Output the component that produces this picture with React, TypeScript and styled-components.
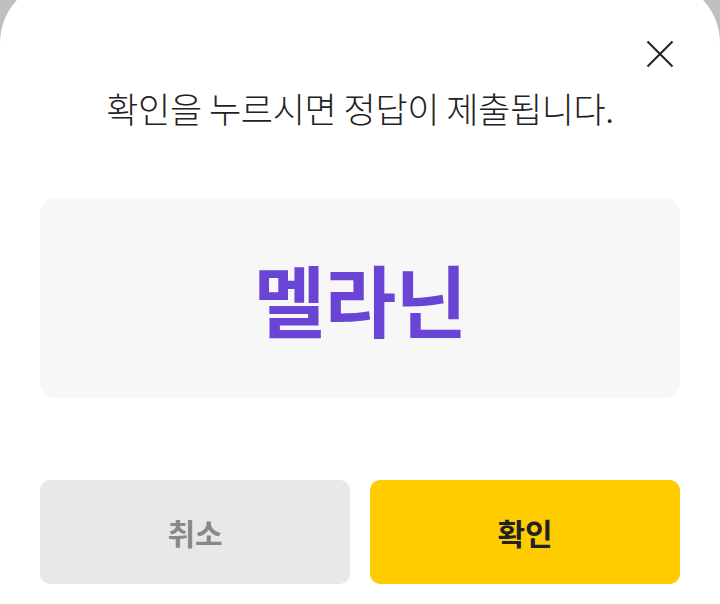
import styled, { createGlobalStyle } from "styled-components";

const GlobalStyle = createGlobalStyle`
  html, body {
    margin: 0;
    padding: 0;
    background: #bfbfbf;
    overflow: hidden;
  }
  body {
    font-family: "Noto Sans CJK KR", "Noto Sans", sans-serif;
  }
`;

const Sheet = styled.div`
  width: 720px;
  height: 624px;
  margin-top: -20px;
  box-sizing: border-box;
  background: #ffffff;
  border-radius: 63px 63px 0 0;
  padding: 60px 40px 20px;
  display: flex;
  flex-direction: column;
`;

const TopBar = styled.div`
  display: flex;
  justify-content: flex-end;
  height: 26px;
`;

const CloseButton = styled.button`
  width: 28px;
  height: 28px;
  padding: 0;
  margin-right: 6px;
  border: none;
  background: transparent;
  cursor: pointer;
  display: flex;
  align-items: center;
  justify-content: center;
`;

const Title = styled.p`
  margin: 17px 0 0;
  text-align: center;
  font-size: 35px;
  line-height: 50px;
  font-weight: 300;
  color: #222222;
  letter-spacing: -0.4px;
`;

const AnswerCard = styled.div`
  margin-top: 65px;
  height: 200px;
  border-radius: 16px;
  background: #f7f7f7;
  display: flex;
  align-items: center;
  justify-content: center;
`;

const AnswerWord = styled.span`
  font-size: 78px;
  font-weight: 700;
  color: #6a44d4;
  letter-spacing: -1px;
  line-height: 1;
`;

const ButtonRow = styled.div`
  margin-top: auto;
  display: grid;
  grid-template-columns: 1fr 1fr;
  gap: 20px;
`;

const ActionButton = styled.button<{ $primary?: boolean }>`
  height: 104px;
  border: none;
  border-radius: 10px;
  font-family: inherit;
  font-size: 30px;
  font-weight: 700;
  cursor: pointer;
  background: ${(p) => (p.$primary ? "#ffcc00" : "#e8e8e8")};
  color: ${(p) => (p.$primary ? "#222222" : "#888888")};
`;

function CloseIcon() {
  return (
    <svg width="28" height="28" viewBox="0 0 28 28">
      <path
        d="M1.5 1.5 L26.5 26.5 M26.5 1.5 L1.5 26.5"
        stroke="#222"
        strokeWidth="2"
        fill="none"
      />
    </svg>
  );
}

export default function App() {
  return (
    <>
      <GlobalStyle />
      <Sheet>
        <TopBar>
          <CloseButton aria-label="닫기">
            <CloseIcon />
          </CloseButton>
        </TopBar>
        <Title>확인을 누르시면 정답이 제출됩니다.</Title>
        <AnswerCard>
          <AnswerWord>멜라닌</AnswerWord>
        </AnswerCard>
        <ButtonRow>
          <ActionButton>취소</ActionButton>
          <ActionButton $primary>확인</ActionButton>
        </ButtonRow>
      </Sheet>
    </>
  );
}
